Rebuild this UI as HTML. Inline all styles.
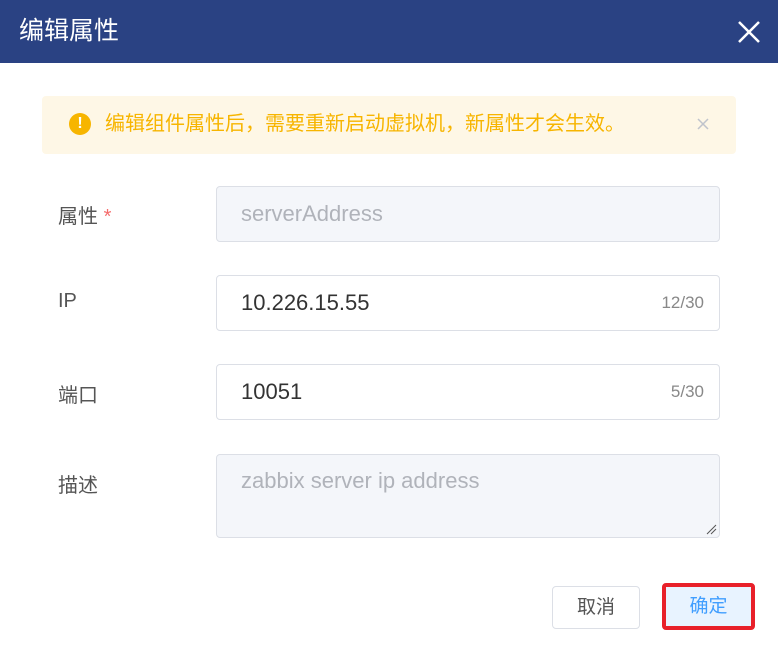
<!DOCTYPE html>
<html><head><meta charset="utf-8"><style>
*{box-sizing:border-box;margin:0;padding:0}
body{width:778px;height:655px;background:#fff;font-family:"Liberation Sans","Noto Sans CJK SC",sans-serif;position:relative;overflow:hidden}
.hd{position:absolute;left:0;top:0;width:778px;height:63px;background:#2a4283;color:#fff;font-size:25px;line-height:63px;padding-left:19px}
.x{position:absolute;right:17px;top:20px}
.al{position:absolute;left:42px;top:96px;width:694px;height:58px;background:#fef7e6;border-radius:4px}
.al .t{position:absolute;left:63px;top:15px;font-size:20px;color:#f7b500;line-height:26px;white-space:nowrap}
.ic{position:absolute;left:27px;top:17px;width:22px;height:22px;border-radius:50%;background:#f7b500;color:#fff;font-weight:bold;font-size:16px;text-align:center;line-height:22px}
.lb{position:absolute;left:58px;font-size:20px;color:#555}
.in{position:absolute;left:216px;width:504px;height:56px;border:1px solid #dcdfe6;border-radius:4px;font-size:22px;line-height:54px;padding-left:24px;color:#333}
.dis{background:#f4f6fa;color:#b0b3ba}
.cnt{position:absolute;right:15px;top:0;font-size:17px;color:#888}
.btn{position:absolute;height:43px;border-radius:4px;font-size:19px;text-align:center;line-height:41px}
</style></head><body>
<div class="hd">编辑属性
<svg class="x" width="24" height="24" viewBox="0 0 24 24"><path d="M2 2L22 22M22 2L2 22" stroke="#fff" stroke-width="2.5"/></svg></div>
<div class="al"><div class="ic">!</div><div class="t">编辑组件属性后，需要重新启动虚拟机，新属性才会生效。</div>
<svg style="position:absolute;left:655px;top:22px" width="12" height="12"><path d="M1 1L11 11M11 1L1 11" stroke="#c0c4cc" stroke-width="1.5"/></svg></div>
<div class="lb" style="top:200px">属性 <span style="color:#f56c6c">*</span></div>
<div class="in dis" style="top:186px">serverAddress</div>
<div class="lb" style="top:290px">IP</div>
<div class="in" style="top:275px">10.226.15.55<span class="cnt">12/30</span></div>
<div class="lb" style="top:379px">端口</div>
<div class="in" style="top:364px">10051<span class="cnt">5/30</span></div>
<div class="lb" style="top:469px">描述</div>
<div class="in dis" style="top:454px;height:84px;line-height:52px">zabbix server ip address
<svg style="position:absolute;right:2px;bottom:2px" width="12" height="12"><path d="M11 2L2 11M11 6L6 11" stroke="#555" stroke-width="1"/></svg></div>
<div class="btn" style="left:552px;top:586px;width:88px;border:1px solid #dcdfe6;color:#555">取消</div>
<div class="btn" style="left:662px;top:583px;width:93px;height:47px;border:4px solid #e8202a;background:#e8f3ff;color:#409eff;line-height:39px">确定</div>
</body></html>
